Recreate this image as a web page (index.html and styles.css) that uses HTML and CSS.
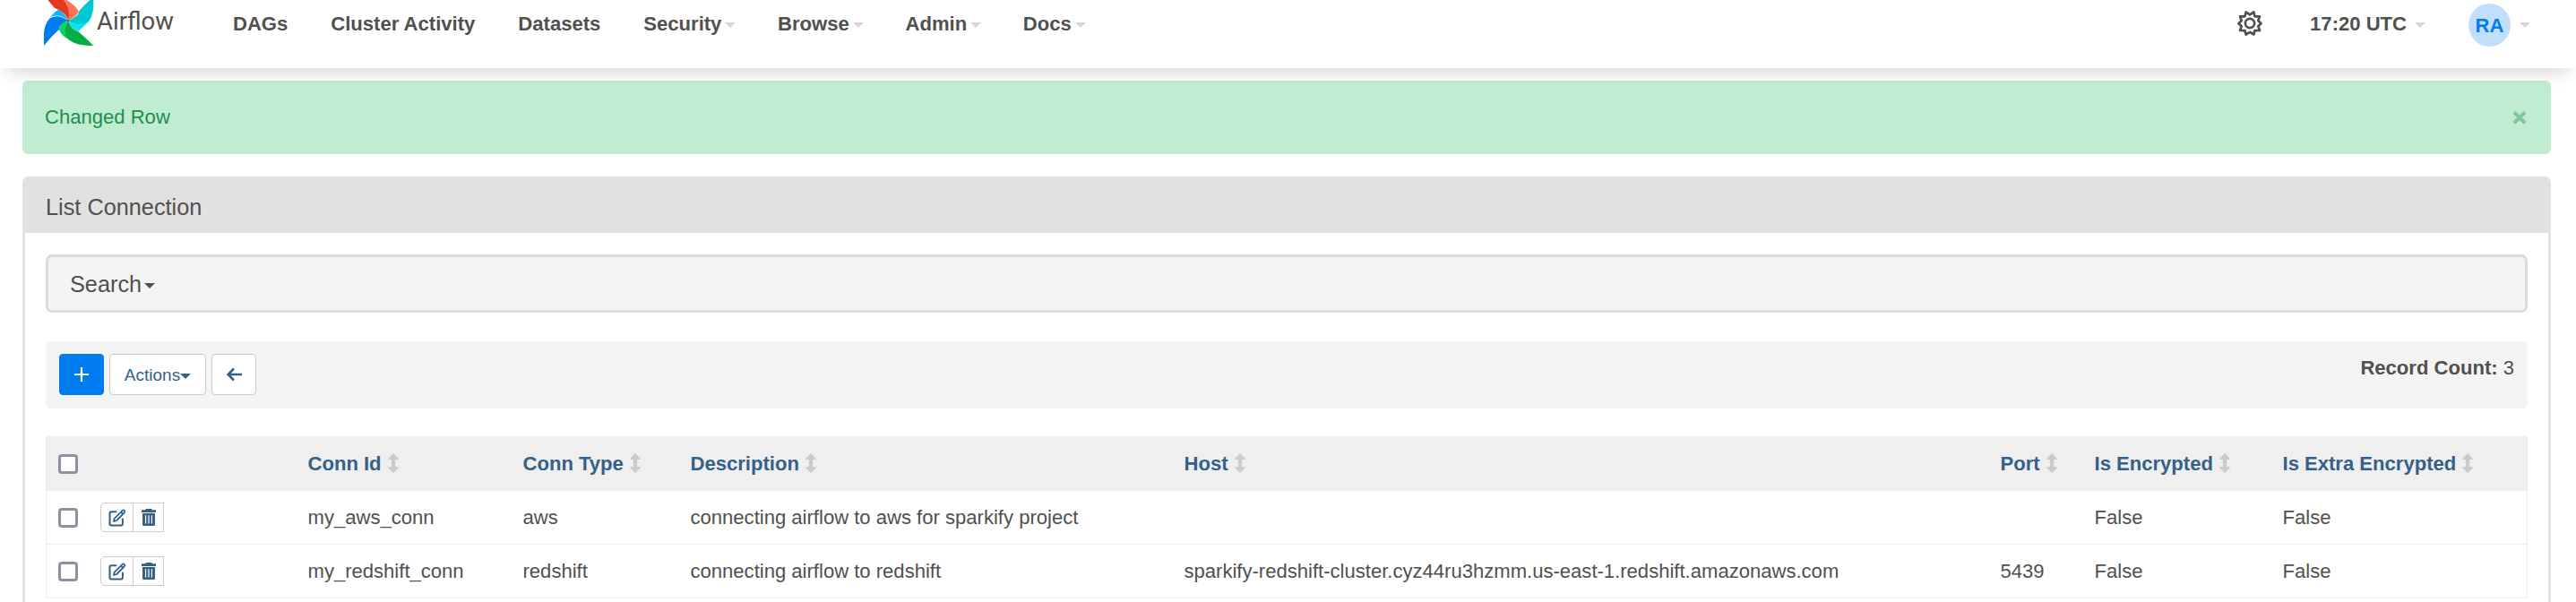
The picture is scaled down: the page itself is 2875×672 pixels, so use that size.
FILE: index.html
```html
<!DOCTYPE html>
<html lang="en">
<head>
<meta charset="utf-8">
<title>List Connection - Airflow</title>
<link rel="stylesheet" href="styles.css">
</head>
<body>
<svg class="sprite" aria-hidden="true">
  <symbol id="sort" viewBox="0 0 12 22"><path d="M6 0L11.500 5.500Q12.300 7 11 7H8.100V15H11Q12.300 15 11.500 16.500L6 22L.5 16.500Q-.3 15 1 15H3.900V7H1Q-.3 7 .5 5.500Z"/></symbol>
  <symbol id="edit" viewBox="0 0 20 20"><g fill="none" stroke="currentColor" stroke-width="2" stroke-linejoin="round" stroke-linecap="round"><path d="M8.500 3.200H3.200Q1.500 3.200 1.500 4.900V16.800Q1.500 18.500 3.200 18.500H14.200Q15.900 18.500 15.900 16.800V11.500"/><path stroke-width="1.800" d="M6.600 10.800L15.600 1.800Q16.600 .9 17.700 1.900T17.900 4.200L9.200 13L6 13.900ZM14 3.500L16.400 5.900"/></g></symbol>
  <symbol id="trash" viewBox="0 0 16 19"><path fill-rule="evenodd" d="M5 0H11L12 1.300H16V4H0V1.300H4ZM1 5H15V17.500Q15 19 13.500 19H2.500Q1 19 1 17.500ZM4 7.300V16.600H5.200V7.300ZM7.400 7.300V16.600H8.600V7.300ZM10.800 7.300V16.600H12V7.300Z"/></symbol>
</svg>
<header class="navbar">
  <a class="brand">
    <svg class="pinwheel" viewBox="0 0 56 56" width="56" height="56">
      <path fill="#e43921" d="M1 -4 L12 9 C20 12 25 16 27 23 C30 15 28 9 24 2 L19 -4Z"/>
      <path fill="#ff7557" d="M27 23 C29 14 27 5 22 -2 C29 2 37 8 39 13 C37 17 33 20 27 23Z"/>
      <path fill="#00c7d4" d="M27 23 C36 19 39 16 39 13 C42 8 50 2 55 -4 C56 8 55 17 50 24 C43 29 33 28 27 23Z"/>
      <path fill="#11e1ee" d="M27 23 C34 28 42 28 50 24 C46 28 42 32 38 35 C33 33 29 29 27 23Z"/>
      <path fill="#0cb6ff" d="M27 23 C20 17 12 16 6 20 C11 15 14 11 17 11 C22 14 25 18 27 23Z"/>
      <path fill="#017cee" d="M27 23 C19 17 11 17 6 21 C0 28 -1 38 0 51 C5 45 10 39 17 33 C17 28 21 26 27 23Z"/>
      <path fill="#00d95a" d="M27 23 C20 26 17 29 17 33 C18 36 21 40 25 43 C23 35 23 29 27 23Z"/>
      <path fill="#04ad46" d="M27 23 C23 30 22 37 25 42 C32 49 42 51 55 51 C50 45 44 40 38 35 C33 34 29 29 27 23Z"/>
      <circle cx="27" cy="23" r="1.100" fill="#51504f"/>
    </svg>
    <span class="wordmark">Airflow</span>
  </a>
  <nav class="menu">
    <a>DAGs</a><a>Cluster Activity</a><a>Datasets</a><a>Security<i class="caret"></i></a><a>Browse<i class="caret"></i></a><a>Admin<i class="caret"></i></a><a>Docs<i class="caret"></i></a>
  </nav>
  <div class="tools">
    <svg class="gear" viewBox="0 0 28 28" width="28" height="28"><g fill="none" stroke="#51504f" stroke-width="2.700" stroke-linejoin="round"><path d="M9.600 1.500L14 4.400L18.400 1.500L19.500 6.300L25 6.300L23.300 11L26.500 14.200L23.300 17.300L25 22L19.500 22.100L18.400 26.500L14 23.800L9.600 26.500L8.500 22.100L3 22L4.700 17.300L1.500 14.200L4.700 11L3 6.300L8.500 6.300Z"/><circle cx="14" cy="14" r="5.100"/></g></svg>
    <span class="clock">17:20 UTC<i class="caret"></i></span>
    <span class="user"><b class="avatar">RA</b><i class="caret"></i></span>
  </div>
</header>
<main>
  <div class="alert">
    <span>Changed Row</span>
    <svg class="close" viewBox="0 0 18 18" width="18" height="18"><path d="M3 3.500L15 15.500M15 3.500L3 15.500" stroke="#e4f8ec" stroke-width="4.400"/><path d="M3 2.500L15 14.500M15 2.500L3 14.500" stroke="#7fc79c" stroke-width="4.400"/></svg>
  </div>
  <section class="panel">
    <h1 class="panel-title">List Connection</h1>
    <div class="panel-body">
      <div class="search">Search<i class="caret"></i></div>
      <div class="toolbar">
        <a class="btn primary"><svg width="16" height="16" viewBox="0 0 16 16"><path d="M8 0V16M0 8H16" stroke="#fff" stroke-width="2.200"/></svg></a>
        <a class="btn actions">Actions<i class="caret"></i></a>
        <a class="btn back"><svg width="17" height="16" viewBox="0 0 17 16"><path d="M8 1.500L1.500 8L8 14.500M1.500 8H17" fill="none" stroke="currentColor" stroke-width="2.600"/></svg></a>
        <span class="count"><b>Record Count:</b> 3</span>
      </div>
      <table class="grid">
        <colgroup><col class="c-check"><col class="c-tools"><col class="c-id"><col class="c-type"><col class="c-desc"><col class="c-host"><col class="c-port"><col class="c-enc"><col class="c-extra"></colgroup>
        <thead><tr>
          <th><i class="check"></i></th><th></th>
          <th>Conn Id<svg class="sort"><use href="#sort"/></svg></th>
          <th>Conn Type<svg class="sort"><use href="#sort"/></svg></th>
          <th>Description<svg class="sort"><use href="#sort"/></svg></th>
          <th>Host<svg class="sort"><use href="#sort"/></svg></th>
          <th>Port<svg class="sort"><use href="#sort"/></svg></th>
          <th>Is Encrypted<svg class="sort"><use href="#sort"/></svg></th>
          <th>Is Extra Encrypted<svg class="sort"><use href="#sort"/></svg></th>
        </tr></thead>
        <tbody>
        <tr>
          <td><i class="check"></i></td>
          <td><div class="row-tools"><a><svg class="edit"><use href="#edit"/></svg></a><a><svg class="trash"><use href="#trash"/></svg></a></div></td>
          <td>my_aws_conn</td><td>aws</td><td>connecting airflow to aws for sparkify project</td><td></td><td></td><td>False</td><td>False</td>
        </tr>
        <tr>
          <td><i class="check"></i></td>
          <td><div class="row-tools"><a><svg class="edit"><use href="#edit"/></svg></a><a><svg class="trash"><use href="#trash"/></svg></a></div></td>
          <td>my_redshift_conn</td><td>redshift</td><td>connecting airflow to redshift</td><td>sparkify-redshift-cluster.cyz44ru3hzmm.us-east-1.redshift.amazonaws.com</td><td>5439</td><td>False</td><td>False</td>
        </tr>
        </tbody>
      </table>
    </div>
  </section>
</main>
</body>
</html>
```
FILE: styles.css
```css
* { box-sizing: border-box; }
html, body { margin: 0; }
body {
  background: #fff;
  color: #51504f;
  font: 22.070px/30px "Liberation Sans", Arial, sans-serif;
}
svg { display: block; flex: none; }
.sprite { display: none; }

.caret {
  display: inline-block;
  flex: none;
  border: 6px solid transparent;
  border-top-color: currentColor;
  border-bottom: 0;
}

.navbar {
  position: relative;
  z-index: 1;
  display: flex;
  height: 76px;
  padding: 0 51px 0 49px;
  background: #fff;
  box-shadow: 0 12px 20px -8px rgba(0, 0, 0, .17);
  font-weight: 700;
}
.navbar .caret { color: #e0d0e0; }
.brand { display: flex; width: 187px; }
.pinwheel { overflow: hidden; }
.wordmark {
  margin-left: 3px;
  padding-top: 9px;
  font: 400 27.500px/30px Roboto, sans-serif;
}
.menu { display: flex; flex: 1; padding-top: 12px; }
.menu a { display: flex; height: 30px; padding: 0 24px; }
.menu .caret { margin: 13px -1.300px 0 4px; }
.tools { display: flex; }
.gear { margin: 12px 53px 0 0; }
.clock { display: flex; padding-top: 12px; }
.clock .caret { margin: 13px 48px 0 9px; }
.user { display: flex; padding-top: 4px; }
.avatar {
  width: 47px;
  height: 48px;
  border-radius: 50%;
  background: #c0dffc;
  color: #017cee;
  line-height: 49px;
  text-align: center;
}
.user .caret { margin: 21px 0 0 10px; }

main { padding: 14px 28px 0 25px; }
.alert {
  display: flex;
  justify-content: space-between;
  height: 82px;
  padding: 26px 26px 0 25px;
  border-radius: 6px;
  background: #c0ecd1;
  color: #208f4c;
}
.close { margin-top: 7px; }
.panel {
  height: 475px;
  margin-top: 25px;
  border: 3px solid #e1e1e1;
  border-bottom: 0;
  border-radius: 7px 7px 0 0;
}
.panel-title {
  height: 60px;
  margin: 0;
  padding: 13px 0 0 23px;
  background: #e1e1e1;
  font-size: 25.300px;
  font-weight: 400;
  line-height: 36px;
}
.panel-body { padding: 24px 23px 0; }
.search {
  display: flex;
  height: 65px;
  padding: 12px 24px;
  border: 3px solid #dbdbdb;
  border-radius: 7px;
  background: #f4f4f4;
  font-size: 25.300px;
  line-height: 36px;
}
.search .caret { margin: 17px 0 0 3px; }
.toolbar {
  display: flex;
  gap: 6px;
  height: 75px;
  margin-top: 32px;
  padding: 14px 15px 0 15px;
  border-radius: 7px;
  background: #f4f4f4;
}
.btn {
  display: flex;
  align-items: center;
  justify-content: center;
  width: 50px;
  height: 46px;
  border: 1px solid #cbcbcb;
  border-radius: 4px;
  background: #fff;
  color: #34608a;
  font-size: 19px;
}
.btn.primary { border-color: #017cee; background: #017cee; }
.btn.actions { width: 108px; padding-top: 1px; }
.btn .caret { margin-top: 2px; }
.count { margin-left: auto; line-height: 32px; }

.grid {
  width: 100%;
  margin-top: 31px;
  border: 1px solid #efefef;
  border-top: 0;
  border-bottom: 0;
  border-spacing: 0;
  table-layout: fixed;
}
.c-check { width: 46px; }
.c-tools { width: 231px; }
.c-id { width: 240px; }
.c-type { width: 187px; }
.c-desc { width: 551px; }
.c-host { width: 911px; }
.c-port { width: 105px; }
.c-enc { width: 210px; }
.grid th, .grid td {
  padding: 0 0 0 14.500px;
  text-align: left;
  white-space: nowrap;
}
.grid th:first-child, .grid td:first-child { padding-left: 13px; }
.grid th:nth-child(2), .grid td:nth-child(2) { padding-left: 14px; }
.grid th { height: 61px; padding-top: 1px; background: #efefef; color: #34608a; }
.grid th:first-child { padding-top: 0; }
.grid td { height: 60px; border-bottom: 1px solid #efefef; }
.sort {
  display: inline-block;
  width: 12px;
  height: 22px;
  margin-left: 7px;
  fill: #cbcbcb;
  vertical-align: -3px;
}
.check {
  display: block;
  width: 22px;
  height: 22px;
  border: 3px solid #918fa0;
  border-radius: 4px;
  background: #fff;
}
.row-tools { display: flex; }
.row-tools a {
  display: flex;
  align-items: center;
  justify-content: center;
  width: 37px;
  height: 33px;
  border: 1px solid #cbcbcb;
  border-radius: 5px 0 0 5px;
  color: #34608a;
}
.row-tools a + a { width: 34px; border-left: 0; border-radius: 0; }
.edit { width: 20px; height: 20px; }
.trash { width: 16px; height: 19px; fill: currentColor; }
```
